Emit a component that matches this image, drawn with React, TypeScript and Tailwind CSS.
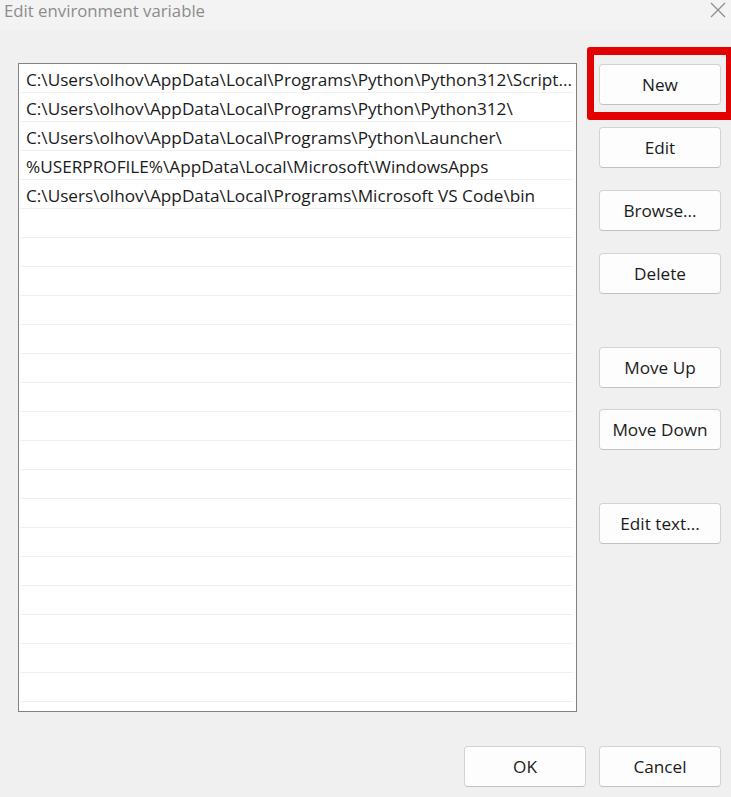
import React from "react";

const paths = [
  "C:\\Users\\olhov\\AppData\\Local\\Programs\\Python\\Python312\\Script...",
  "C:\\Users\\olhov\\AppData\\Local\\Programs\\Python\\Python312\\",
  "C:\\Users\\olhov\\AppData\\Local\\Programs\\Python\\Launcher\\",
  "%USERPROFILE%\\AppData\\Local\\Microsoft\\WindowsApps",
  "C:\\Users\\olhov\\AppData\\Local\\Programs\\Microsoft VS Code\\bin",
];

function Btn({ label, className = "" }: { label: string; className?: string }) {
  return (
    <div
      className={
        "h-[41px] w-[122px] rounded-[4px] border border-[#d3d3d3] border-b-[#c2c2c2] bg-[#fdfdfd] flex items-center justify-center text-[17.2px] text-[#1b1b1b] " +
        className
      }
    >
      {label}
    </div>
  );
}

export default function App() {
  const rows = Array.from({ length: 23 }, (_, i) => paths[i] ?? "");
  return (
    <div className="relative w-[731px] h-[797px] overflow-hidden bg-[#f0f0f0] font-['Open_Sans',sans-serif]">
      <div className="h-[30px] bg-[#f3f3f3] flex items-start justify-between pl-[4px] pr-[5px]">
        <span className="text-[16.75px] leading-[20px] text-[#8c8c8c] pt-[1px]">Edit environment variable</span>
        <svg width="16" height="16" viewBox="0 0 16 16" className="mt-[2px]">
          <path d="M1 1 L15 15 M15 1 L1 15" stroke="#8c8c8c" strokeWidth="1.2" fill="none" />
        </svg>
      </div>
      <div className="flex pl-[18px] pt-[33px]">
        <div className="w-[559px] h-[649px] border border-[#828282] bg-white overflow-hidden">
          {rows.map((p, i) => (
            <div key={i} className="h-[29px] mr-[3px] ml-[1px] border-b border-[#f0f0f0] flex items-center pl-[6px] pr-[1px] pt-[4px]">
              <span className="text-[17.2px] text-[#1b1b1b] whitespace-nowrap">{p}</span>
            </div>
          ))}
        </div>
        <div className="ml-[22px] mt-[1px] flex flex-col">
          <Btn label="New" />
          <Btn label="Edit" className="mt-[22px]" />
          <Btn label="Browse..." className="mt-[22px]" />
          <Btn label="Delete" className="mt-[22px]" />
          <Btn label="Move Up" className="mt-[53px]" />
          <Btn label="Move Down" className="mt-[21px]" />
          <Btn label="Edit text..." className="mt-[53px]" />
        </div>
      </div>
      <div className="flex justify-end gap-[13px] pr-[10px] mt-[34px]">
        <Btn label="OK" />
        <Btn label="Cancel" />
      </div>
      <div className="absolute left-[587px] top-[47px] w-[146px] h-[73px] border-[7px] border-y-[8px] border-[#e30000] rounded-[3px]" />
    </div>
  );
}
